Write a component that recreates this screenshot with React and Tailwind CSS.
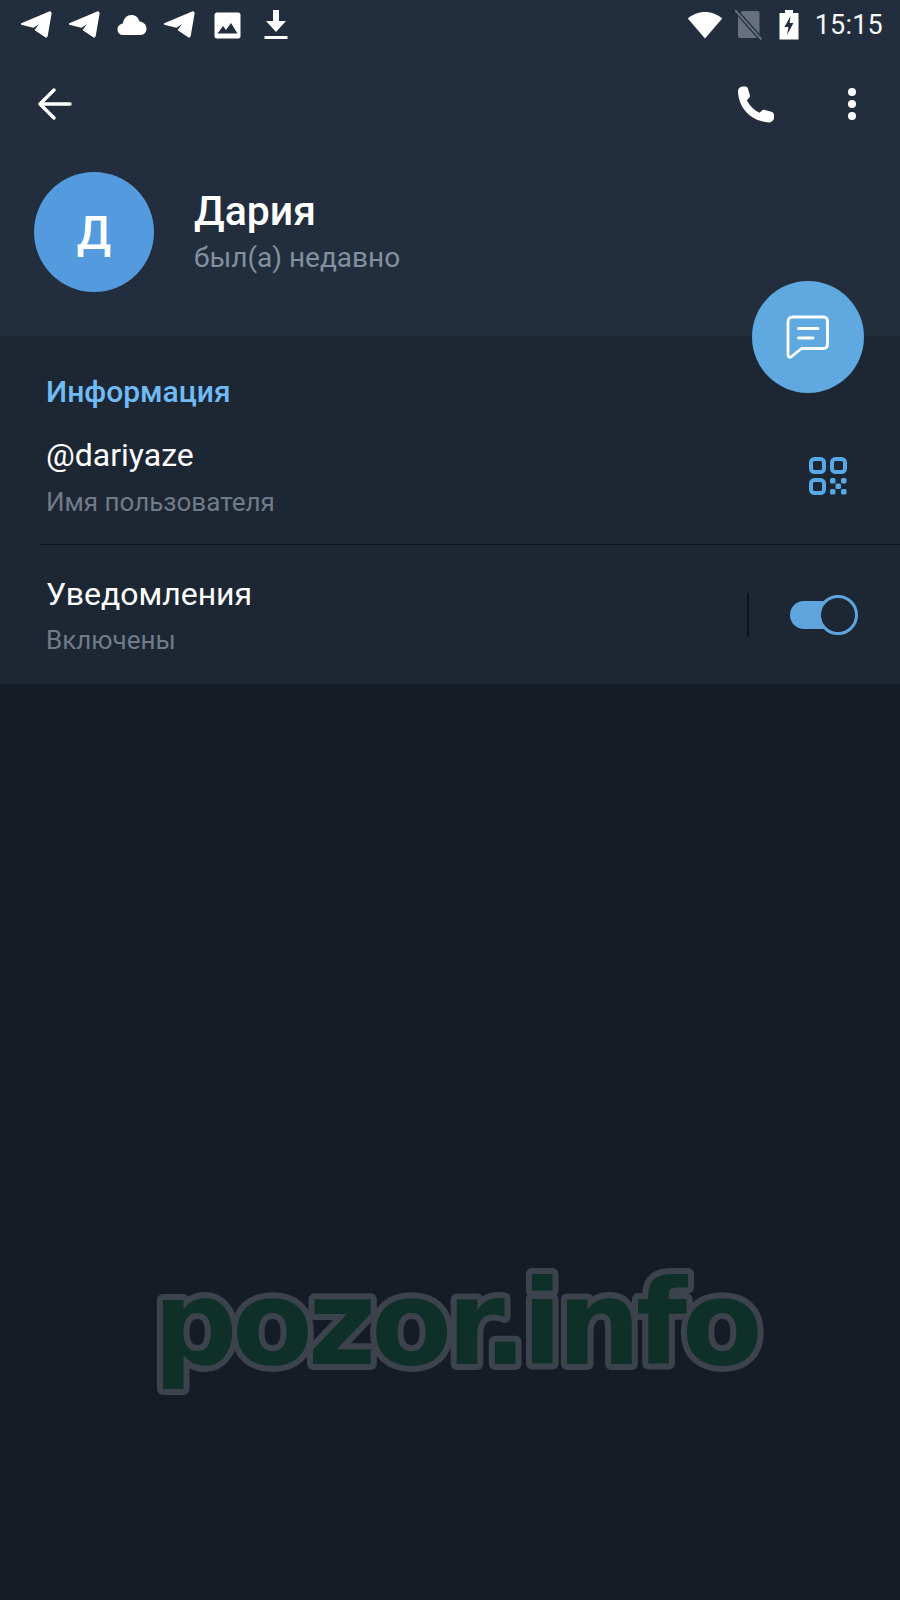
const Plane = () => (
  <svg width="34" height="30" viewBox="0 0 34 30" fill="#fff" stroke="#fff" strokeWidth="1.4" strokeLinejoin="round">
    <path d="M1.5 14 L30 2 L31 3 L27 26 L26 27 L15.5 20 L22 11.5 L13.5 17 Z" />
  </svg>
);

const StatusIconsLeft = () => (
  <div className="flex items-center">
    <div className="ml-[20px]"><Plane /></div>
    <div className="ml-[14px]"><Plane /></div>
    <svg className="ml-[15px]" width="30" height="22" viewBox="0 0 30 22" fill="#fff">
      <path d="M6.5 21 C3 21 .5 18.6 .5 15.4 C.5 12.2 3 10 5.8 9.6 C6.6 4.4 10.2 1 14.4 1 C18.4 1 21.6 3.6 22.6 7.6 C26.6 8 29.5 11 29.5 14.8 C29.5 18.4 27 21 23.5 21 Z" />
    </svg>
    <div className="ml-[16px]"><Plane /></div>
    <svg className="ml-[17px]" width="27" height="27" viewBox="0 0 27 27">
      <rect x="0.5" y="0.5" width="26" height="26" rx="2.5" fill="#fff" />
      <path d="M3.5 21.5 L9 14 L12 18 L17 11 L23.5 21.5 Z" fill="#222e3d" />
    </svg>
    <svg className="ml-[23px]" width="24" height="32" viewBox="0 0 24 32" fill="#fff">
      <path d="M9 1 H15 V12 H22 L12 23 L2 12 H9 Z" />
      <rect x="0.5" y="27" width="23" height="3" />
    </svg>
  </div>
);

const StatusIconsRight = () => (
  <div className="flex items-center">
    <svg width="36" height="28" viewBox="0 0 36 28" fill="#fff">
      <path d="M18 27.5 L.8 7.5 C5.5 3.4 11.3 1 18 1 C24.7 1 30.5 3.4 35.2 7.5 Z" />
    </svg>
    <svg className="ml-[12px]" width="27" height="30" viewBox="0 0 27 30">
      <path d="M7 1 H22 Q24.5 1 24.5 3.5 V26 Q24.5 28 22 28 H5 Q3 28 3 26 V6 Z" fill="#66717d" />
      <path d="M1 1 L26 29" stroke="#222e3d" strokeWidth="4.5" />
      <path d="M0 0 L26.5 29.5" stroke="#66717d" strokeWidth="2" />
    </svg>
    <svg className="ml-[17px]" width="20" height="30" viewBox="0 0 20 30">
      <path d="M6 0 H14 V3 H19.5 V29.5 H.5 V3 H6 Z" fill="#fff" />
      <path d="M11.5 6 L5.5 17 H9.5 L8 25 L14.5 13 H10.5 Z" fill="#222e3d" />
    </svg>
    <span className="ml-[16px] text-[27px] leading-none text-[#f4f6f8] tracking-[0.2px]">15:15</span>
  </div>
);

const Back = () => (
  <svg width="34" height="32" viewBox="0 0 34 32" fill="none" stroke="#fff" strokeWidth="3.4" strokeLinecap="round" strokeLinejoin="round">
    <path d="M2 16 H32 M16 2 L2 16 L16 30" />
  </svg>
);

const Phone = () => (
  <svg width="38" height="37" viewBox="0 0 38 37" fill="#fff">
    <path d="M1 5.5 C1 2.6 3.4.6 6 .6 H8.2 C9.6.6 10.6 1.4 11 2.8 L12.8 9 C13.1 10.2 12.8 11.2 12 12 L9.8 14.2 C12.4 19.6 16.8 24 22.6 26.8 L25 24.6 C25.8 23.8 26.9 23.6 28 23.9 L34.3 25.8 C35.9 26.3 37 27.4 37 29 V31.6 C37 34.4 34.6 36.6 31.8 36.4 C14.4 35.2 1.6 22.4 1 5.5 Z" />
  </svg>
);

const Dots = () => (
  <div className="flex flex-col gap-[4px]">
    <span className="block w-[8px] h-[8px] rounded-full bg-white" />
    <span className="block w-[8px] h-[8px] rounded-full bg-white" />
    <span className="block w-[8px] h-[8px] rounded-full bg-white" />
  </div>
);

const Qr = () => (
  <svg width="38" height="38" viewBox="0 0 38 38" fill="none">
    <g stroke="#57a8e6" strokeWidth="4">
      <rect x="2" y="2" width="13" height="13" rx="3.5" />
      <rect x="23" y="2" width="13" height="13" rx="3.5" />
      <rect x="2" y="23" width="13" height="13" rx="3.5" />
    </g>
    <g fill="#57a8e6">
      <rect x="21" y="21" width="5.5" height="5.5" rx="1.6" />
      <rect x="32" y="21" width="5.5" height="5.5" rx="1.6" />
      <rect x="26.5" y="26.5" width="5.5" height="5.5" rx="1.6" />
      <rect x="21" y="32" width="5.5" height="5.5" rx="1.6" />
      <rect x="32" y="32" width="5.5" height="5.5" rx="1.6" />
    </g>
  </svg>
);

const Chat = () => (
  <svg width="44" height="44" viewBox="0 0 44 44" fill="none" stroke="#fff" strokeWidth="2.8" strokeLinecap="round" strokeLinejoin="round">
    <path d="M7 2 H37 Q41.5 2 41.5 6.5 V29 Q41.5 33.5 37 33.5 H15.5 L5 42 Q2 43 2 39.5 V7 Q2 2 7 2 Z" />
    <path d="M12.5 13.5 H32 M12.5 23 H27" />
  </svg>
);

const Watermark = () => (
  <svg className="absolute left-[120px] top-[1230px]" width="700" height="200" viewBox="0 0 700 200">
    <text
      x="33"
      y="134"
      fontFamily="'DejaVu Sans', sans-serif"
      fontWeight="700"
      fontSize="118"
      letterSpacing="-5.4"
      fill="#0f3028"
      stroke="#3c434c"
      strokeWidth="12"
      strokeLinejoin="round"
      paintOrder="stroke fill"
    >
      pozor.info
    </text>
  </svg>
);

export default function App() {
  return (
    <div
      className="relative w-[900px] h-[1600px] overflow-hidden bg-[#151c26] text-white"
      style={{ fontFamily: "Roboto, 'Noto Sans', sans-serif" }}
    >
      <header className="h-[336px] bg-[#222e3d] flex flex-col">
        <div className="h-[50px] flex items-center justify-between pr-[17px]">
          <StatusIconsLeft />
          <StatusIconsRight />
        </div>
        <div className="h-[108px] flex items-center justify-between pl-[38px] pr-[44px]">
          <Back />
          <div className="flex items-center gap-[73px]">
            <Phone />
            <Dots />
          </div>
        </div>
        <div className="mt-[14px] flex items-center pl-[34px]">
          <div className="w-[120px] h-[120px] rounded-full bg-[#539ade] flex items-center justify-center pt-[3px] text-[46px] font-medium">
            Д
          </div>
          <div className="ml-[40px] flex flex-col">
            <div className="text-[41px] leading-[44px] font-medium">Дария</div>
            <div className="mt-[8px] text-[28px] leading-[34px] text-[#8290a0]">был(а) недавно</div>
          </div>
        </div>
      </header>

      <section className="h-[348px] bg-[#1d2733] flex flex-col">
        <div className="pl-[46px] pt-[38px] text-[30px] leading-[36px] font-medium text-[#70baf5]">
          Информация
        </div>
        <div className="h-[134px] flex items-start justify-between pl-[46px] pr-[53px] pt-[25px]">
          <div className="flex flex-col">
            <div className="text-[32px] leading-[40px]">@dariyaze</div>
            <div className="mt-[11px] text-[26px] leading-[32px] text-[#6f7b87]">Имя пользователя</div>
          </div>
          <div className="mt-[22px]"><Qr /></div>
        </div>
        <div className="ml-[40px] h-[1px] bg-[#0f141b]" />
        <div className="flex-1 flex items-start justify-between pl-[46px] pr-[42px] pt-[27px]">
          <div className="flex flex-col">
            <div className="text-[32px] leading-[44px]">Уведомления</div>
            <div className="mt-[8px] text-[26px] leading-[32px] text-[#6f7b87]">Включены</div>
          </div>
          <div className="flex items-center mt-[21px]">
            <div className="w-[2px] h-[44px] bg-[#0f141b]" />
            <div className="relative ml-[41px] w-[68px] h-[40px] flex items-center">
              <div className="w-[50px] h-[28px] rounded-full bg-[#5ea5dd]" />
              <div className="absolute right-0 top-0 w-[40px] h-[40px] rounded-full bg-[#1d2733] border-[3.5px] border-[#5ea5dd]" />
            </div>
          </div>
        </div>
      </section>

      <button className="absolute left-[752px] top-[281px] w-[112px] h-[112px] rounded-full bg-[#5fa8e0] flex items-center justify-center">
        <Chat />
      </button>

      <Watermark />
    </div>
  );
}
